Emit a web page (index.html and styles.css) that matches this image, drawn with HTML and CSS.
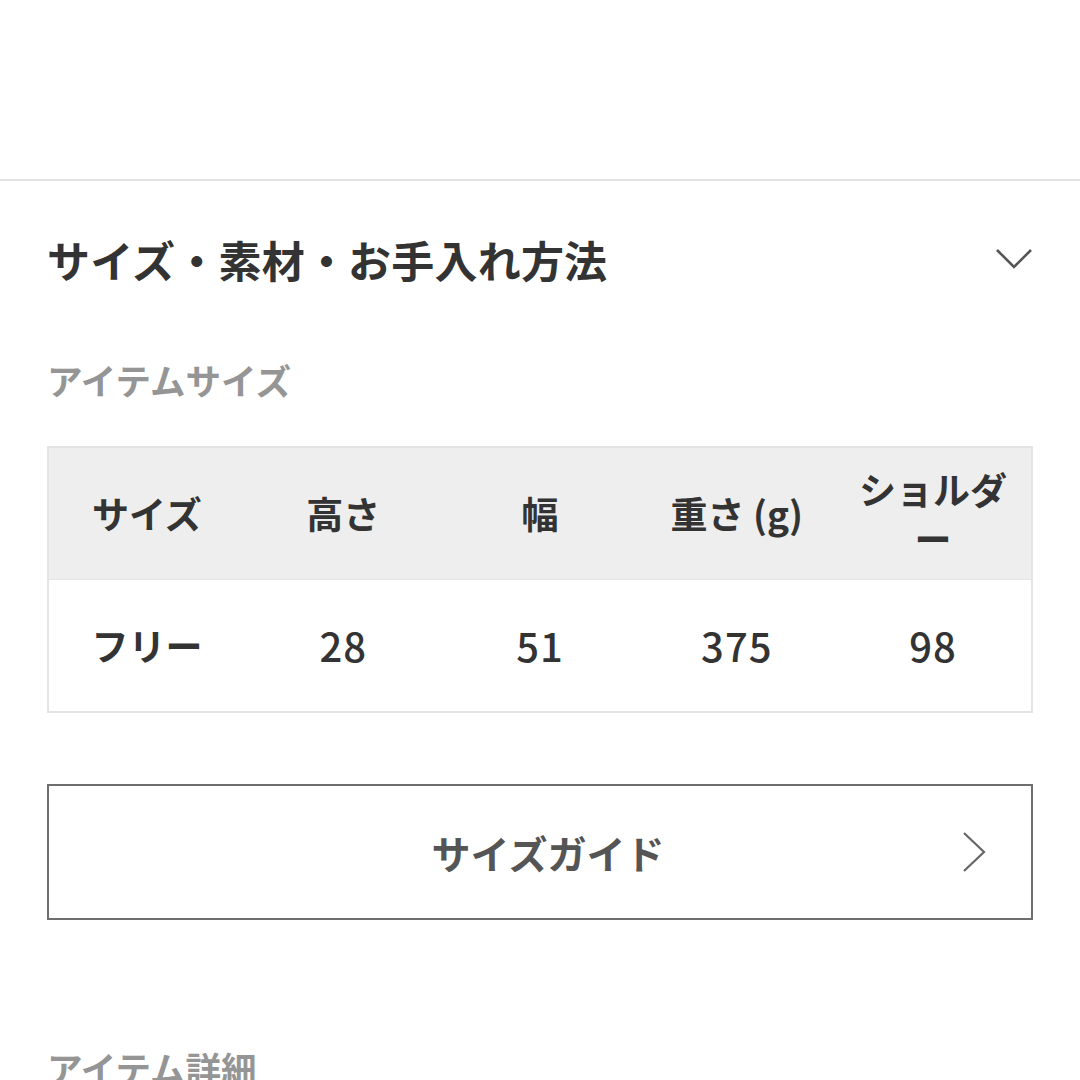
FILE: index.html
```html
<!DOCTYPE html>
<html lang="ja">
<head>
<meta charset="utf-8">
<title>サイズ・素材・お手入れ方法</title>
<link rel="stylesheet" href="styles.css">
</head>
<body>
<div class="top-space"></div>
<section class="section">
  <div class="section-head">
    <h2 class="section-title">サイズ・素材・お手入れ方法</h2>
    <svg class="chev-down" width="38" height="24" viewBox="0 0 38 24"><polyline points="2,3 19,20 36,3" fill="none" stroke="#555" stroke-width="2.6"/></svg>
  </div>
  <h3 class="sub-title">アイテムサイズ</h3>
  <table class="size-table">
    <tr class="head-row">
      <td>サイズ</td><td>高さ</td><td>幅</td><td>重さ (g)</td><td>ショルダー</td>
    </tr>
    <tr class="body-row">
      <td>フリー</td><td class="num">28</td><td class="num">51</td><td class="num">375</td><td class="num">98</td>
    </tr>
  </table>
  <a class="guide-btn" href="#">
    <span class="guide-label">サイズガイド</span>
    <svg class="chev-right" width="26" height="42" viewBox="0 0 26 42"><polyline points="3,2 23,21 3,40" fill="none" stroke="#666" stroke-width="2.2"/></svg>
  </a>
  <h3 class="sub-title detail-title">アイテム詳細</h3>
</section>
</body>
</html>
```
FILE: styles.css
```css
html, body {
  margin: 0;
  padding: 0;
  background: #ffffff;
  height: 1080px;
  overflow: hidden;
}
body {
  font-family: "Noto Sans CJK JP", "Noto Sans", sans-serif;
  color: #333333;
}
.top-space {
  height: 179px;
  border-bottom: 2px solid #e3e3e3;
}
.section {
  padding: 0 47px;
}
.section-head {
  display: flex;
  align-items: center;
  justify-content: space-between;
  margin-top: 48px;
  height: 60px;
}
.section-title {
  margin: 0;
  font-size: 43px;
  font-weight: 700;
  line-height: 60px;
  color: #333;
  letter-spacing: 0.2px;
}
.chev-down {
  margin-right: 0;
  margin-top: 0;
}
.sub-title {
  margin: 0;
  font-size: 35.5px;
  font-weight: 700;
  line-height: 48px;
  color: #959595;
}
.section-head + .sub-title {
  margin-top: 67px;
}
.size-table {
  margin-top: 42px;
  width: 100%;
  border-collapse: collapse;
  table-layout: fixed;
  border: 2px solid #e4e4e4;
}
.size-table td {
  height: 131px;
  padding: 0 20px;
  text-align: center;
  vertical-align: middle;
  font-size: 37px;
  font-weight: 700;
  line-height: 49px;
  color: #333;
}
.head-row td {
  background: #eeeeee;
  border-bottom: 1px solid #e4e4e4;
}
.body-row td {
  background: #ffffff;
}
.size-table td.num {
  font-size: 40px;
  font-weight: 500;
  letter-spacing: 1px;
}
.guide-btn {
  margin-top: 71px;
  height: 132px;
  border: 2px solid #6e6e6e;
  display: flex;
  align-items: center;
  justify-content: center;
  position: relative;
  text-decoration: none;
}
.guide-label {
  font-size: 39px;
  font-weight: 700;
  color: #555;
  margin-left: 16px;
  letter-spacing: 0;
}
.chev-right {
  position: absolute;
  right: 44px;
  top: 45px;
}
.detail-title {
  margin-top: 124px;
}
```
